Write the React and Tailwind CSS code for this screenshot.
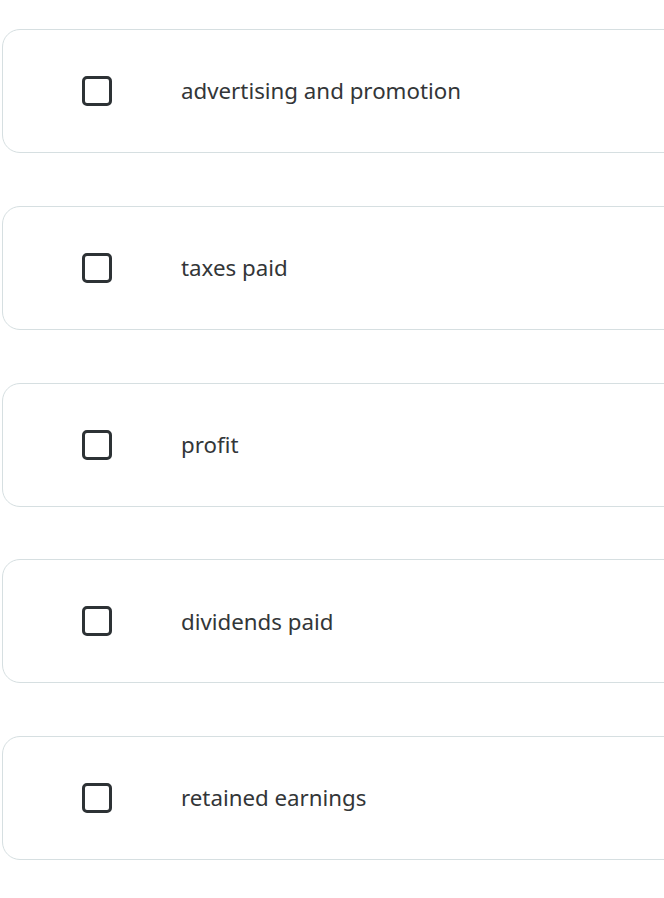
import React from "react";

const items = [
    "advertising and promotion",
    "taxes paid",
    "profit",
    "dividends paid",
    "retained earnings",
];

const OptionRow = ({ label }) => {
    return (
        <div className="flex items-center h-[124px] w-[720px] shrink-0 rounded-[18px] border border-[#d6dfe1] bg-white">
            <div className="ml-[79px] w-[30px] h-[30px] rounded-[5px] border-[3px] border-[#2d3235]" />
            <span className="ml-[69px] text-[22.3px] text-[#333638] leading-none pt-[1px]">
                {label}
            </span>
        </div>
    );
};

const App = () => {
    return (
        <div
            className="w-[664px] h-[898px] overflow-hidden bg-white pt-[29px] pl-[2px]"
            style={{ fontFamily: '"Noto Sans", "Open Sans", sans-serif' }}>
            <div className="flex flex-col gap-[52.75px]">
                {items.map(item => (
                    <OptionRow key={item} label={item} />
                ))}
            </div>
        </div>
    );
};

export default App;
